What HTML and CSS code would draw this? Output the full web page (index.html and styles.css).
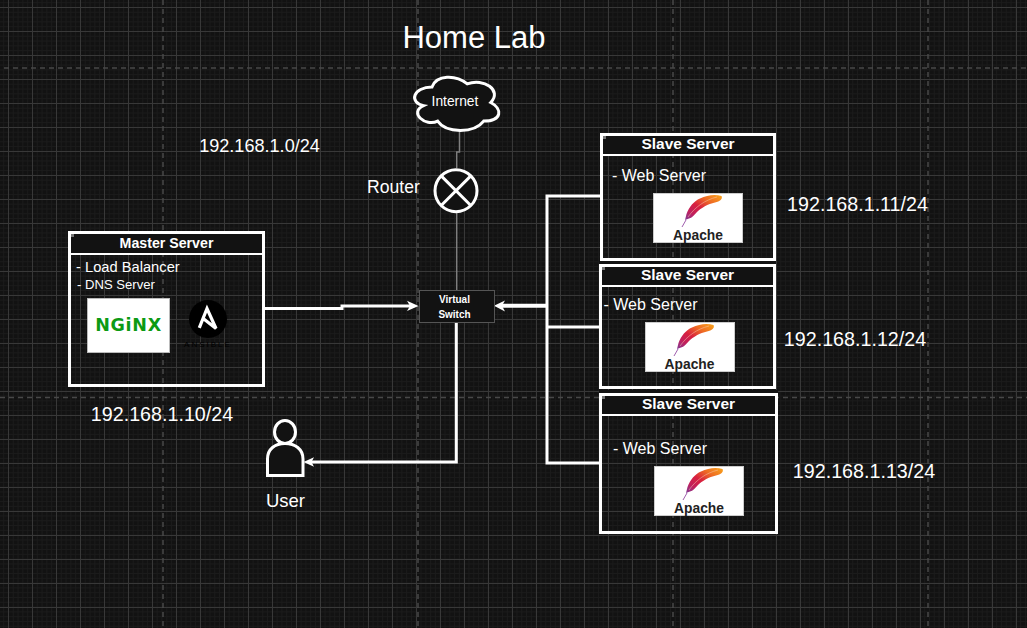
FILE: index.html
```html
<!DOCTYPE html>
<html lang="en">
<head>
<meta charset="utf-8">
<title>Home Lab</title>
<link rel="stylesheet" href="styles.css">
</head>
<body>
<main class="canvas">
  <svg class="wires" width="1027" height="628" viewBox="0 0 1027 628" aria-hidden="true">
    <defs>
      <linearGradient id="feather" x1="0" y1="1" x2="1" y2="0">
        <stop offset="0" stop-color="#7d3c98"/>
        <stop offset="0.22" stop-color="#c0205e"/>
        <stop offset="0.45" stop-color="#d8203f"/>
        <stop offset="0.7" stop-color="#ee6a24"/>
        <stop offset="1" stop-color="#f9a61a"/>
      </linearGradient>
    </defs>
    <path class="page-break" d="M4 68H1027M0 397.5H1027M163 0V628M418 0V628M673 0V628M928 0V628"/>
    <path class="thin" d="M459.5 131V152H456.7V168M456.7 213V290"/>
    <path class="wire" d="M265 308.5H342V306H410"/>
    <path class="wire" d="M600 196H547V463H600M547 327H600"/>
    <path class="wire-thick" d="M548 305.7H501"/>
    <path class="wire" d="M456.3 323V462H310"/>
    <polygon class="arrow" points="418.5,306 407,300.7 410,306 407,311"/>
    <polygon class="arrow" points="494,305.7 505,300.5 502,305.7 505,311.5"/>
    <polygon class="arrow" points="303.5,462 314,457.3 311.5,462 314,466.7"/>
    <path class="shape" vector-effect="non-scaling-stroke" transform="translate(408.5 71.5) scale(.94 .62)" d="M25 25C5 25 0 50 16 55C0 66 18 90 31 80C40 100 70 100 80 80C100 80 100 60 87.5 50C100 30 80 10 62.5 20C50 5 30 5 25 25Z"/>
    <circle class="shape" cx="456" cy="190.7" r="21"/>
    <path class="cross" d="M441.2 175.9L470.8 205.5M470.8 175.9L441.2 205.5"/>
    <ellipse class="shape" cx="285" cy="432" rx="10.5" ry="11.5"/>
    <path class="shape" d="M267.5 475.5V459C267.5 449 275 443.5 285 443.5C295 443.5 303 449 303 459V475.5Z"/>
  </svg>

  <h1 class="title">Home Lab</h1>
  <p class="label ip-router">192.168.1.0/24</p>
  <p class="label ip-master">192.168.1.10/24</p>
  <p class="label ip-slave-1">192.168.1.11/24</p>
  <p class="label ip-slave-2">192.168.1.12/24</p>
  <p class="label ip-slave-3">192.168.1.13/24</p>
  <p class="label router-name">Router</p>
  <p class="label user-name">User</p>
  <p class="label internet-name">Internet</p>

  <div class="switch">Virtual<br>Switch</div>

  <section class="server master">
    <h2 class="server-title master-title">Master Server</h2>
    <div class="server-body">
      <p class="line line-lb">- Load Balancer</p>
      <p class="line line-dns">- DNS Server</p>
      <div class="logos">
        <div class="nginx"><span class="nginx-word">NGiNX</span></div>
        <div class="ansible">
          <svg class="ansible-mark" width="38" height="38" viewBox="0 0 38 38" aria-hidden="true">
            <circle cx="19" cy="19" r="19" fill="#000"/>
            <path d="M10.3 27.8L18 8.5L27 28.5L14.5 18.8" fill="none" stroke="#fff" stroke-width="3.2" stroke-linejoin="miter"/>
          </svg>
          <span class="ansible-word">ANSIBLE</span>
        </div>
      </div>
    </div>
  </section>

  <section class="server slave slave-1">
    <h2 class="server-title">Slave Server</h2>
    <div class="server-body">
      <p class="line line-web">- Web Server</p>
      <div class="apache">
        <svg class="feather" width="90" height="50" viewBox="0 0 90 50" aria-hidden="true">
          <path d="M29 34L33 27" stroke="#a05fae" fill="none"/>
          <path d="M32 27L33.5 21C36 14 41 8 47 5.5C54 2 62 .8 68.5 3C70 6 67 8.5 62 9.5C55 11 48 15 44 19C41 22 39 25 36 25.5Z" fill="url(#feather)"/>
          <path d="M35 24C42 14 52 7 64 4" stroke="#f6c9b0" stroke-width=".5" fill="none"/>
        </svg>
        <span class="apache-word">Apache</span>
      </div>
    </div>
  </section>

  <section class="server slave slave-2">
    <h2 class="server-title">Slave Server</h2>
    <div class="server-body">
      <p class="line line-web">- Web Server</p>
      <div class="apache">
        <svg class="feather" width="90" height="50" viewBox="0 0 90 50" aria-hidden="true">
          <path d="M29 34L33 27" stroke="#a05fae" fill="none"/>
          <path d="M32 27L33.5 21C36 14 41 8 47 5.5C54 2 62 .8 68.5 3C70 6 67 8.5 62 9.5C55 11 48 15 44 19C41 22 39 25 36 25.5Z" fill="url(#feather)"/>
          <path d="M35 24C42 14 52 7 64 4" stroke="#f6c9b0" stroke-width=".5" fill="none"/>
        </svg>
        <span class="apache-word">Apache</span>
      </div>
    </div>
  </section>

  <section class="server slave slave-3">
    <h2 class="server-title">Slave Server</h2>
    <div class="server-body">
      <p class="line line-web">- Web Server</p>
      <div class="apache">
        <svg class="feather" width="90" height="50" viewBox="0 0 90 50" aria-hidden="true">
          <path d="M29 34L33 27" stroke="#a05fae" fill="none"/>
          <path d="M32 27L33.5 21C36 14 41 8 47 5.5C54 2 62 .8 68.5 3C70 6 67 8.5 62 9.5C55 11 48 15 44 19C41 22 39 25 36 25.5Z" fill="url(#feather)"/>
          <path d="M35 24C42 14 52 7 64 4" stroke="#f6c9b0" stroke-width=".5" fill="none"/>
        </svg>
        <span class="apache-word">Apache</span>
      </div>
    </div>
  </section>
</main>
</body>
</html>
```
FILE: styles.css
```css
* { box-sizing: border-box; margin: 0; padding: 0; }

html, body { width: 100%; height: 100%; overflow: hidden; background: #121212; }

body { font-family: "Liberation Sans", Arial, sans-serif; color: #fff; }

.canvas {
  position: relative;
  width: 1027px;
  height: 628px;
  overflow: hidden;
  background-color: #121212;
  background-image:
    linear-gradient(#383838 1px, transparent 1px),
    linear-gradient(90deg, #383838 1px, transparent 1px),
    linear-gradient(#1b1b1b 1px, transparent 1px),
    linear-gradient(90deg, #1b1b1b 1px, transparent 1px);
  background-size: 24px 24px, 24px 24px, 4.8px 4.8px, 4.8px 4.8px;
  background-position: 0 7px, 8px 0, 0 7px, 8px 0;
}

.wires { position: absolute; left: 0; top: 0; display: block; }

.page-break { fill: none; stroke: #484848; stroke-width: 1.5; stroke-dasharray: 5 4; }
.thin { fill: none; stroke: #7e7e7e; stroke-width: 1.5; }
.wire { fill: none; stroke: #fff; stroke-width: 3; }
.wire-thick { fill: none; stroke: #fff; stroke-width: 4; }
.arrow { fill: #fff; }
.shape { fill: #121212; stroke: #fff; stroke-width: 3; }
.cross { fill: none; stroke: #fff; stroke-width: 3; }

.title, .label { position: absolute; white-space: nowrap; text-align: center; font-weight: 400; }

.title { left: 374px; top: 19px; width: 200px; font-size: 31px; line-height: 37px; }

.label { width: 200px; line-height: 24px; font-size: 19.7px; }
.ip-router { left: 159.5px; top: 134px; font-size: 18.1px; }
.ip-master { left: 62px; top: 402px; }
.ip-slave-1 { left: 757.5px; top: 192px; }
.ip-slave-2 { left: 755px; top: 327px; }
.ip-slave-3 { left: 764px; top: 459px; }
.router-name { left: 293.5px; top: 175px; font-size: 17.6px; }
.user-name { left: 185.5px; top: 489px; font-size: 18.5px; }
.internet-name { left: 355px; top: 90px; font-size: 13.8px; }

.switch {
  position: absolute;
  left: 419px;
  top: 290px;
  width: 76px;
  height: 33px;
  padding-right: 5px;
  display: flex;
  align-items: center;
  justify-content: center;
  text-align: center;
  font-size: 10px;
  font-weight: 700;
  line-height: 15px;
  background: #121212;
  border: 1.5px solid #555;
}

.server { position: absolute; display: flex; flex-direction: column; border: 3px solid #fff; }

.server::before {
  content: "";
  position: absolute;
  left: 0;
  top: 0;
  width: 3px;
  height: 3px;
  background: #777;
}

.server-title {
  flex: none;
  text-align: center;
  font-weight: 700;
  background: #121212;
  border-bottom: 2.7px solid #fff;
  white-space: nowrap;
}

.line { white-space: nowrap; }

.master { left: 68px; top: 231px; width: 197px; height: 156px; }
.master-title { height: 21px; font-size: 14.2px; line-height: 18px; }
.master .server-body { padding: 3px 0 0 5px; }
.line-lb { font-size: 14.7px; line-height: 18px; }
.line-dns { font-size: 13.1px; line-height: 18px; margin-left: 1px; }

.logos { display: flex; margin-top: 4px; margin-left: 11px; gap: 13px; }

.nginx {
  width: 83px;
  height: 55px;
  background: #fff;
  border: 1px solid #bbb;
  display: flex;
  align-items: center;
  justify-content: center;
}

.nginx-word {
  font-family: "DejaVu Sans", sans-serif;
  font-size: 17.5px;
  font-weight: 700;
  line-height: 1;
  letter-spacing: 0.7px;
  color: #0c9a14;
}

.ansible { display: flex; flex-direction: column; align-items: center; width: 50px; margin-top: 2px; }
.ansible-mark { display: block; }
.ansible-word { margin-top: 3px; font-size: 8px; line-height: 8px; letter-spacing: 2px; color: #000; white-space: nowrap; }

.slave .server-title { height: 20px; font-size: 15.5px; line-height: 15px; }

.slave-2, .slave-3 { box-shadow: 0 -3px 0 #121212; }

.line-web { font-size: 16px; line-height: 20px; }

.slave-1 { left: 600px; top: 133px; width: 176px; height: 128px; }
.slave-1 .server-body { padding: 10px 0 0 9px; }
.slave-2 { left: 599px; top: 264px; width: 177px; height: 125px; }
.slave-2 .server-body { padding: 8px 0 0 1.5px; }
.slave-3 { left: 599px; top: 393px; width: 179px; height: 141px; }
.slave-3 .server-body { padding: 23px 0 0 11px; }

.apache {
  position: relative;
  width: 90px;
  height: 50.5px;
  margin: 6.5px 0 0 41px;
  background: #fff;
  border: 1px solid #ccc;
  display: flex;
  align-items: flex-end;
  justify-content: center;
}

.feather { position: absolute; left: -1px; top: -1px; display: block; }

.apache-word { font-size: 13.8px; font-weight: 700; line-height: 13px; color: #222; }
```
